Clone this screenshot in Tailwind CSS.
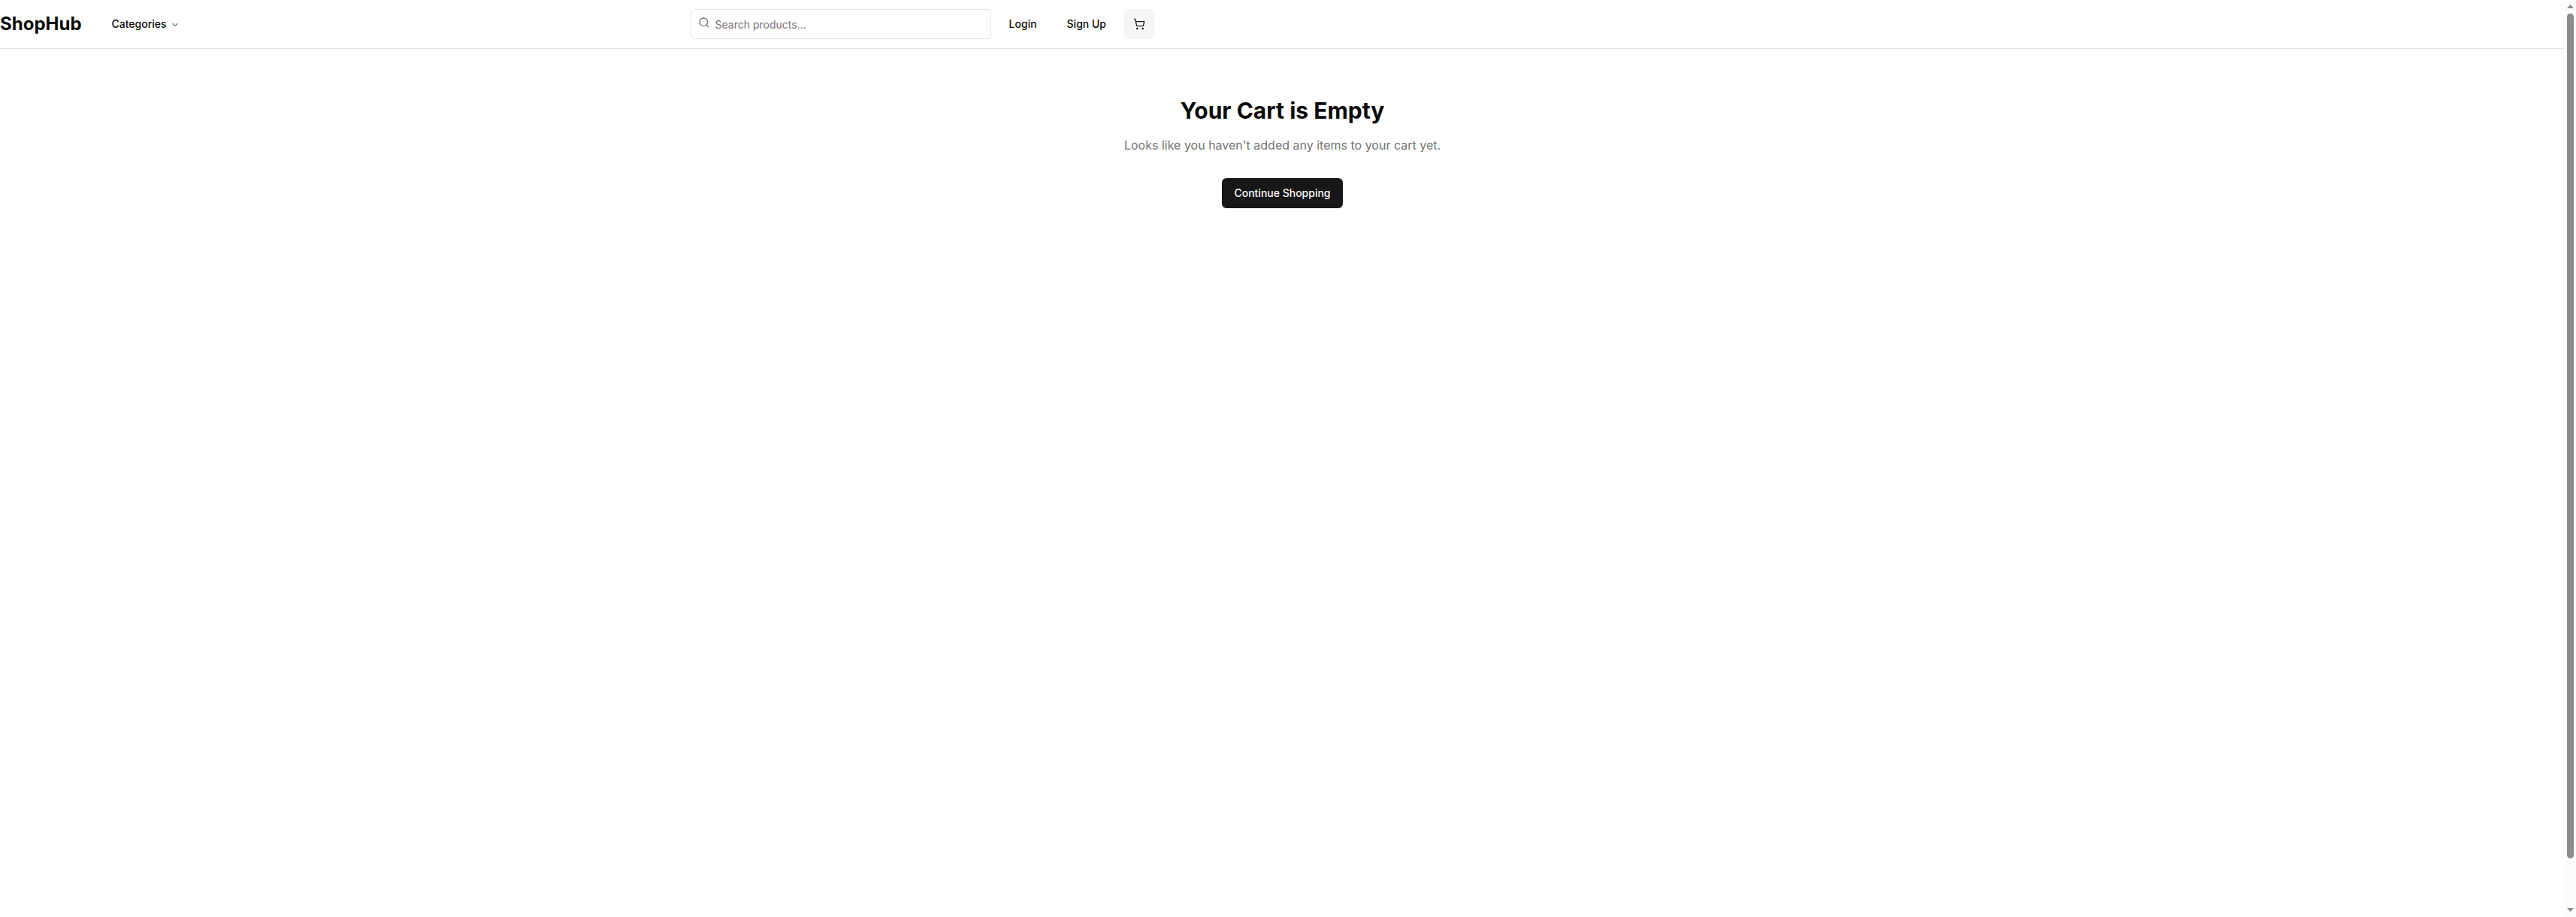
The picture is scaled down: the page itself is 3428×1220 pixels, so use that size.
<!DOCTYPE html>
<html lang="en">
<head>
<meta charset="utf-8">
<title>ShopHub</title>
<script src="https://cdn.jsdelivr.net/npm/@tailwindcss/browser@4"></script>
</head>
<body class="flex h-screen overflow-hidden bg-white font-['Inter',sans-serif] text-neutral-950 antialiased">
<div class="flex-1">
  <header class="border-b border-[#e5e5e5]">
    <div class="flex h-16 w-[1536px] items-center">
      <a class="text-2xl font-bold">ShopHub</a>
      <nav class="ml-6">
        <button class="flex h-10 items-center px-4 text-sm font-medium">Categories
          <svg class="relative top-px ml-[5px] size-3" viewBox="0 0 24 24" fill="none" stroke="currentColor" stroke-width="2" stroke-linecap="round" stroke-linejoin="round"><path d="m6 9 6 6 6-6"/></svg>
        </button>
      </nav>
      <div class="ml-auto flex items-center gap-2">
        <div class="relative w-[400px]">
          <svg class="absolute left-2.5 top-2.5 size-4 text-[#737373]" viewBox="0 0 24 24" fill="none" stroke="currentColor" stroke-width="2" stroke-linecap="round" stroke-linejoin="round"><circle cx="11" cy="11" r="8"/><path d="m21 21-4.3-4.3"/></svg>
          <input type="search" placeholder="Search products..." class="block h-10 w-full rounded-md border border-[#e5e5e5] py-2 pl-8 pr-3 text-sm placeholder:text-[#737373]">
        </div>
        <button class="h-10 px-4 text-sm font-medium">Login</button>
        <button class="h-10 px-4 text-sm font-medium">Sign Up</button>
        <button class="flex size-10 items-center justify-center rounded-md bg-neutral-100 text-neutral-900">
          <svg class="size-4" viewBox="0 0 24 24" fill="none" stroke="currentColor" stroke-width="2" stroke-linecap="round" stroke-linejoin="round"><circle cx="8" cy="21" r="1"/><circle cx="19" cy="21" r="1"/><path d="M2.05 2.05h2l2.66 12.42a2 2 0 0 0 2 1.58h9.78a2 2 0 0 0 1.95-1.57l1.65-7.43H5.12"/></svg>
        </button>
      </div>
    </div>
  </header>
  <main class="flex flex-col items-center pt-16">
    <h1 class="mb-4 text-3xl font-bold">Your Cart is Empty</h1>
    <p class="mb-8 text-base text-[#737373]">Looks like you haven't added any items to your cart yet.</p>
    <button class="h-10 rounded-md bg-neutral-900 px-4 text-sm font-medium text-neutral-50">Continue Shopping</button>
  </main>
</div>
<div class="flex w-[15px] flex-col items-center bg-[#fcfcfc]">
  <svg class="mt-1.5 h-[5px] w-[9px]" viewBox="0 0 9 5" fill="#8b8b8b"><path d="M0 5 4.5 0 9 5z"/></svg>
  <div class="mt-[7px] h-[1124px] w-[9px] rounded-full bg-[#8b8b8b]"></div>
  <svg class="mb-[7px] mt-auto h-[5px] w-[9px]" viewBox="0 0 9 5" fill="#8b8b8b"><path d="M0 0h9L4.5 5z"/></svg>
</div>
</body>
</html>
